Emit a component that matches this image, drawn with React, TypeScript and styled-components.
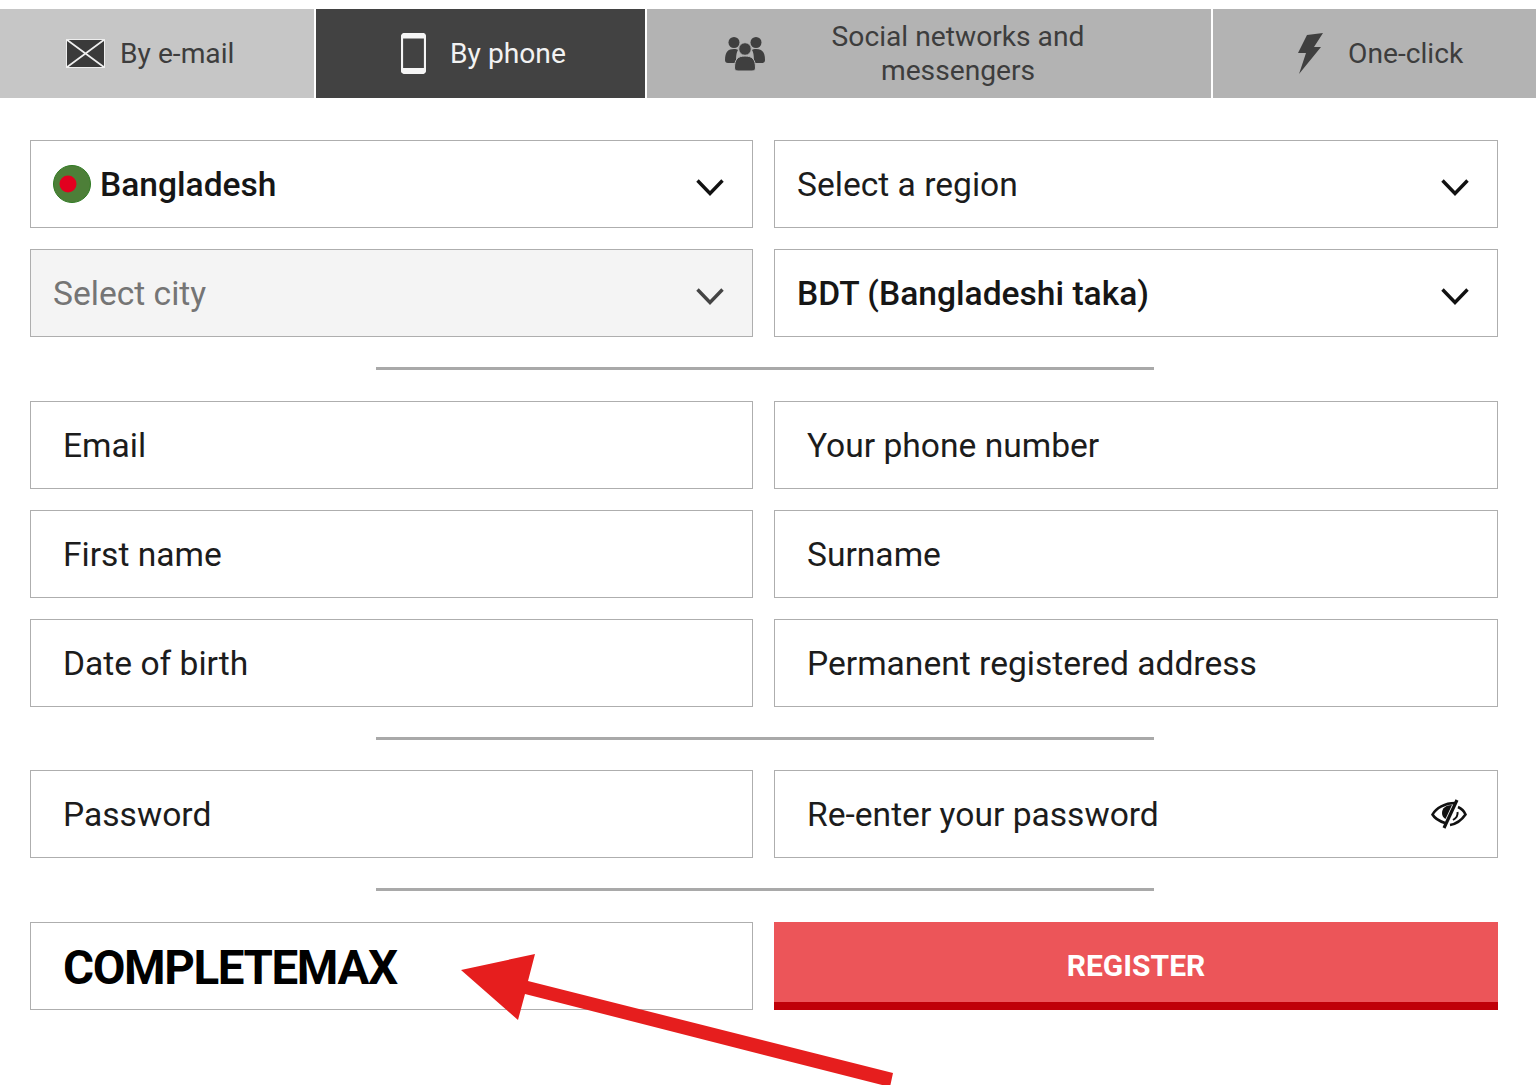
import styled, { createGlobalStyle } from "styled-components";

const GlobalStyle = createGlobalStyle`
  html, body {
    margin: 0;
    padding: 0;
    background: #fff;
    overflow: hidden;
  }
  * {
    box-sizing: border-box;
  }
`;

const Page = styled.div`
  position: relative;
  width: 1536px;
  height: 1085px;
  padding-top: 9px;
  overflow: hidden;
  font-family: Roboto, "Liberation Sans", sans-serif;
  color: #1a1a1a;
`;

const Tabs = styled.div`
  display: grid;
  grid-template-columns: 314px 329px 564px 323px;
  column-gap: 2px;
  height: 89px;
`;

const Tab = styled.div<{ $active?: boolean; $light?: boolean; $inset: number; $gap: number }>`
  display: flex;
  align-items: center;
  padding-left: ${(p) => p.$inset}px;
  gap: ${(p) => p.$gap}px;
  background: ${(p) => (p.$active ? "#424242" : p.$light ? "#c6c6c6" : "#b3b3b3")};
  color: ${(p) => (p.$active ? "#f2f2f2" : "#3d3d3d")};
  font-size: 28.2px;
  line-height: 34px;
`;

const TabWideLabel = styled.span`
  width: 310px;
  text-align: center;
`;

const Form = styled.div`
  padding: 42px 38px 0 30px;
`;

const Row = styled.div`
  display: grid;
  grid-template-columns: 723px 724px;
  column-gap: 21px;
  margin-bottom: 21px;
`;

const Field = styled.div<{ $disabled?: boolean; $select?: boolean }>`
  display: flex;
  align-items: center;
  justify-content: space-between;
  height: 88px;
  padding: 0 ${(p) => (p.$select ? "27px" : "30px")} 0 ${(p) => (p.$select ? "22px" : "32px")};
  border: 1.5px solid #aeaeae;
  background: ${(p) => (p.$disabled ? "#f4f4f4" : "#fff")};
  font-size: 33.6px;
  color: ${(p) => (p.$disabled ? "#757575" : "#1c1c1c")};
`;

const Strong = styled.span`
  font-weight: 500;
  color: #161616;
`;

const FlagLabel = styled.span`
  display: flex;
  align-items: center;
  gap: 9px;
`;

const Divider = styled.div<{ $after?: number }>`
  width: 778px;
  height: 3px;
  margin: 30px 0 ${(p) => p.$after ?? 31}px 346px;
  background: #a9a9a9;
`;

const Promo = styled.span`
  margin-top: 3px;
  font-size: 47.5px;
  font-weight: 700;
  letter-spacing: -1.4px;
  color: #000;
`;

const RegisterButton = styled.button`
  height: 88px;
  padding: 6px 0 0;
  border: 0;
  border-bottom: 8px solid #c00008;
  background: #ec5559;
  color: #fff;
  font-family: inherit;
  font-size: 30px;
  font-weight: 700;
`;

const Arrow = styled.svg`
  position: absolute;
  left: 0;
  top: 0;
  pointer-events: none;
`;

const ChevronSvg = styled.svg`
  margin-top: 5px;
`;

function Chevron({ color = "#111" }: { color?: string }) {
  return (
    <ChevronSvg width="30" height="20" viewBox="0 0 30 20" fill="none">
      <path d="M2.5 3.5 15 16.5 27.5 3.5" stroke={color} strokeWidth="3.4" />
    </ChevronSvg>
  );
}

function MailIcon() {
  return (
    <svg width="39" height="29" viewBox="0 0 39 29">
      <rect x="0" y="0" width="39" height="29" fill="#3a3a3a" />
      <path d="M0.5 0.5 38.5 28.5M38.5 0.5 0.5 28.5" stroke="#eee" strokeWidth="1.8" />
      <rect x="0.5" y="0.5" width="38" height="28" fill="none" stroke="#eee" strokeWidth="1" />
    </svg>
  );
}

function PhoneIcon() {
  return (
    <svg width="25" height="41" viewBox="0 0 25 41">
      <rect x="1" y="1" width="23" height="39" rx="2.5" fill="none" stroke="#f5f5f5" strokeWidth="2.2" />
      <rect x="2" y="2" width="21" height="3.5" fill="#f5f5f5" />
      <rect x="2" y="35" width="21" height="4" fill="#f5f5f5" />
    </svg>
  );
}

function PeopleIcon() {
  return (
    <svg width="40" height="35" viewBox="0 0 40 35" fill="#3f3f3f">
      <circle cx="9" cy="6.5" r="5.5" />
      <circle cx="31" cy="6.5" r="5.5" />
      <path d="M0 24c0-8 3-11 9-11 2 0 3 .4 4 1-1.500 2.500-2 6-2 13H3c-2 0-3-1-3-3z" />
      <path d="M40 24c0-8-3-11-9-11-2 0-3 .4-4 1 1.500 2.500 2 6 2 13h8c2 0 3-1 3-3z" />
      <circle cx="20" cy="13" r="6.300" stroke="#b3b3b3" strokeWidth="1" />
      <path d="M9.500 32c0-9 3.500-12 10.500-12s10.500 3 10.500 12c0 2-1.500 3-3.500 3H13c-2 0-3.500-1-3.500-3z" stroke="#b3b3b3" strokeWidth="1" />
    </svg>
  );
}

function BoltIcon() {
  return (
    <svg width="26" height="41" viewBox="0 0 26 41" fill="#3f3f3f">
      <path d="M10 2 26 0 17 14 24 14 2 41 9 20 1 20z" />
    </svg>
  );
}

function FlagIcon() {
  return (
    <svg width="38" height="38" viewBox="0 0 38 38">
      <circle cx="19" cy="19" r="18.500" fill="#4d7f38" stroke="#2f7a22" strokeWidth="1" />
      <circle cx="15" cy="19" r="8.500" fill="#e2001f" />
    </svg>
  );
}

function EyeIcon() {
  return (
    <svg width="36" height="30" viewBox="0 0 36 30" fill="none" stroke="#111" strokeWidth="2.600">
      <path d="M14 24C8 22 3.500 19 1.500 15.500 5 9 14 4 24 4" />
      <path d="M21 6c-6 0-10 3-10 8 0 3 1.500 5 3.500 6z" fill="#111" stroke="none" />
      <path d="M26 1 13 29" strokeWidth="3.200" />
      <path d="M27 8c3.500 1.500 6 4 7.500 7.500C30 22 25 25 19 26" />
      <path d="M26.500 13c.5 3-1 6-4.500 8" strokeWidth="2" />
    </svg>
  );
}

export default function App() {
  return (
    <Page>
      <GlobalStyle />
      <Tabs>
        <Tab $light $inset={66} $gap={15}>
          <MailIcon />
          By e-mail
        </Tab>
        <Tab $active $inset={85} $gap={24}>
          <PhoneIcon />
          By phone
        </Tab>
        <Tab $inset={78} $gap={38}>
          <PeopleIcon />
          <TabWideLabel>Social networks and messengers</TabWideLabel>
        </Tab>
        <Tab $inset={84} $gap={25}>
          <BoltIcon />
          One-click
        </Tab>
      </Tabs>

      <Form>
        <Row>
          <Field $select>
            <FlagLabel>
              <FlagIcon />
              <Strong>Bangladesh</Strong>
            </FlagLabel>
            <Chevron />
          </Field>
          <Field $select>
            Select a region
            <Chevron />
          </Field>
        </Row>
        <Row>
          <Field $select $disabled>
            Select city
            <Chevron color="#444" />
          </Field>
          <Field $select>
            <Strong>BDT (Bangladeshi taka)</Strong>
            <Chevron />
          </Field>
        </Row>
        <Divider />
        <Row>
          <Field>Email</Field>
          <Field>Your phone number</Field>
        </Row>
        <Row>
          <Field>First name</Field>
          <Field>Surname</Field>
        </Row>
        <Row>
          <Field>Date of birth</Field>
          <Field>Permanent registered address</Field>
        </Row>
        <Divider $after={30} />
        <Row>
          <Field>Password</Field>
          <Field>
            Re-enter your password
            <EyeIcon />
          </Field>
        </Row>
        <Divider />
        <Row>
          <Field>
            <Promo>COMPLETEMAX</Promo>
          </Field>
          <RegisterButton>REGISTER</RegisterButton>
        </Row>
      </Form>

      <Arrow width="1536" height="1085" viewBox="0 0 1536 1085">
        <polygon
          points="461,970 535,954 528,981 893,1073 890,1087 525,994 518,1020"
          fill="#e61e1e"
        />
      </Arrow>
    </Page>
  );
}
